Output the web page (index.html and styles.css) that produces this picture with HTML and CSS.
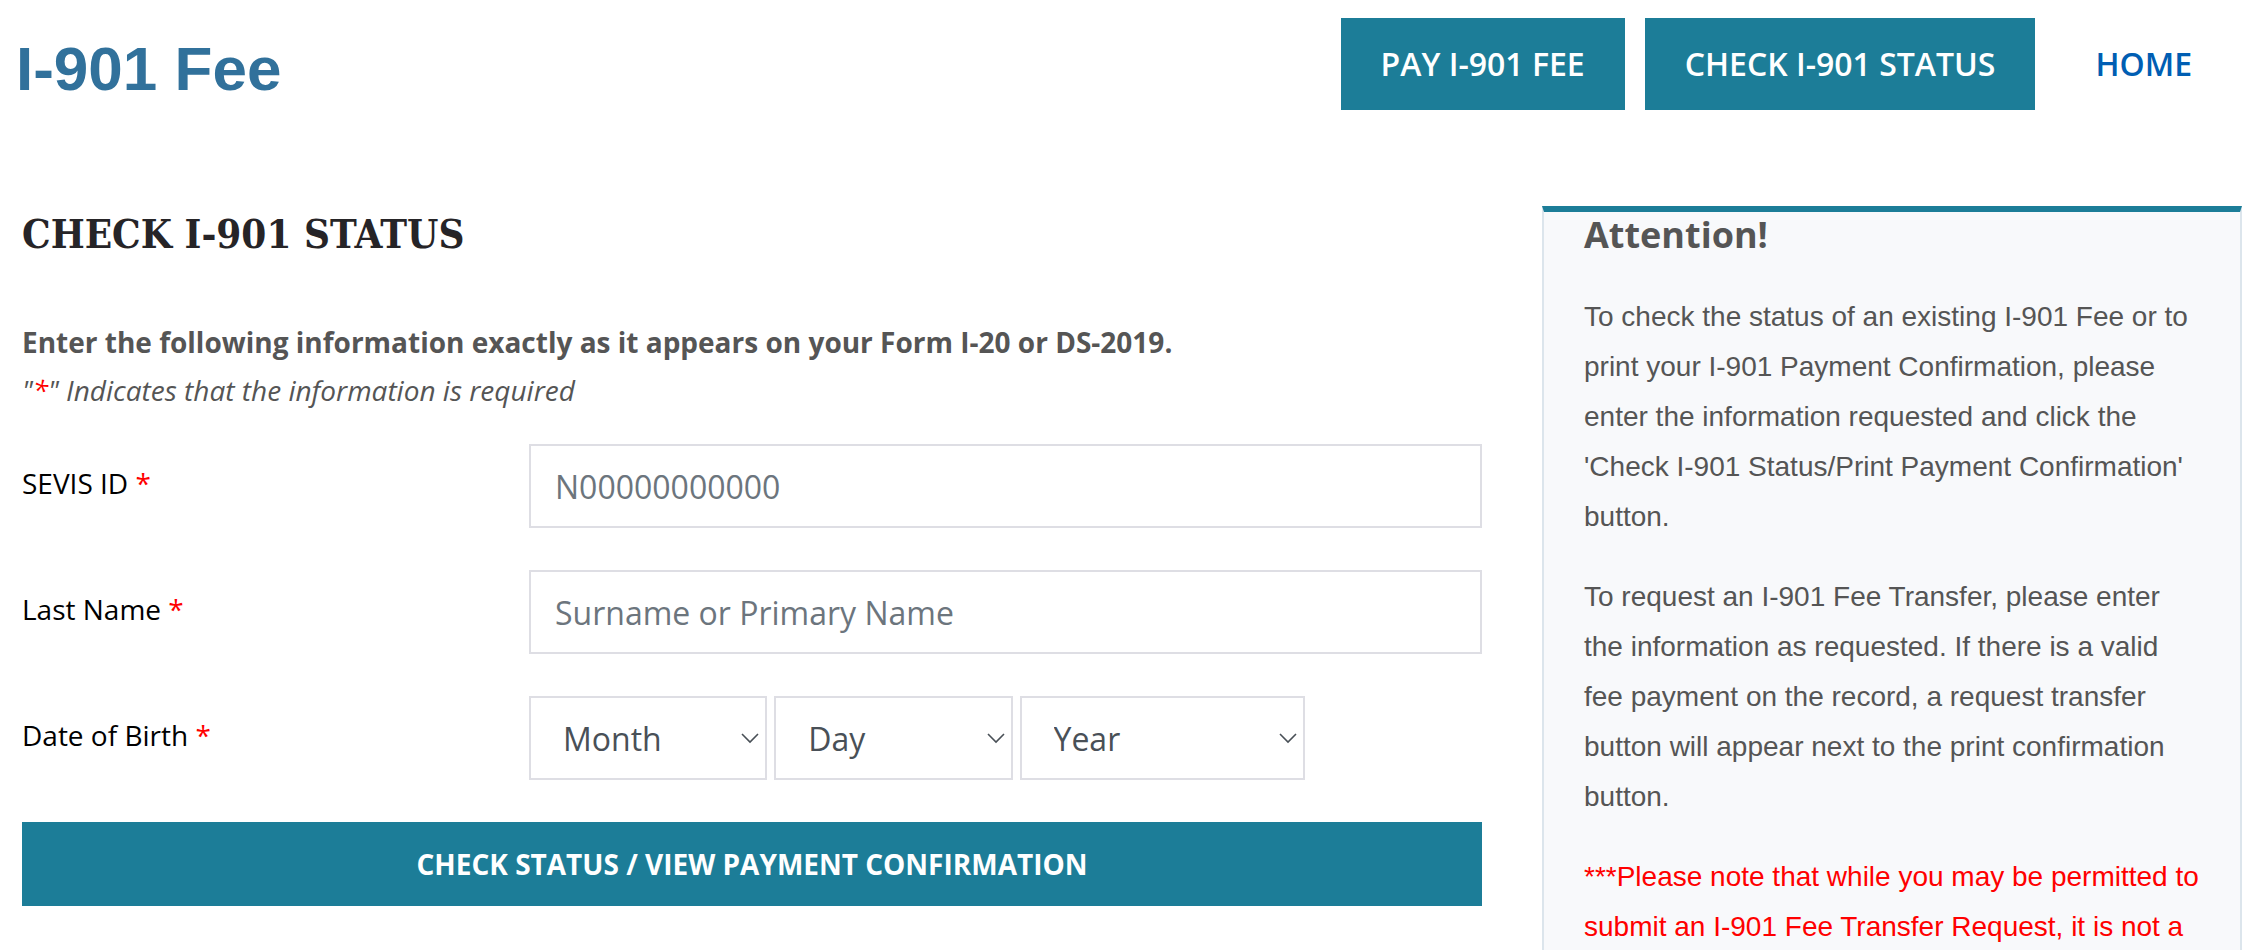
FILE: index.html
```
<!DOCTYPE html>
<html lang="en">
<head>
    <meta charset="UTF-8">
    <meta name="viewport" content="width=device-width, initial-scale=1.0">
    <title>Check I-901 Status</title>
    <link rel="stylesheet" href="styles.css">
</head>
<body>
    <header class="header">
        <a href="#" class="logo">I-901 Fee</a>
        <nav class="nav">
            <a href="#" class="nav-button">PAY I-901 FEE</a>
            <a href="#" class="nav-button">CHECK I-901 STATUS</a>
            <a href="#" class="nav-link">HOME</a>
        </nav>
    </header>
    <div class="content">
        <main>
            <h1>CHECK I-901 STATUS</h1>
            <p class="intro"><strong>Enter the following information exactly as it appears on your Form I-20 or DS-2019.</strong></p>
            <p class="intro"><em>"<span class="required">*</span>" Indicates that the information is required</em></p>
            <form class="status-form">
                <div class="row">
                    <label for="sevis-id">SEVIS ID <span class="required">*</span></label>
                    <input type="text" id="sevis-id" class="field" placeholder="N00000000000">
                </div>
                <div class="row">
                    <label for="last-name">Last Name <span class="required">*</span></label>
                    <input type="text" id="last-name" class="field" placeholder="Surname or Primary Name">
                </div>
                <div class="row">
                    <label for="month">Date of Birth <span class="required">*</span></label>
                    <div class="dates">
                        <div class="select">
                            <select id="month" class="field" aria-label="Month">
                                <option>Month</option>
                            </select>
                            <svg class="arrow" viewBox="0 0 18 11"><path d="M1 1l8 8 8-8"/></svg>
                        </div>
                        <div class="select">
                            <select id="day" class="field" aria-label="Day">
                                <option>Day</option>
                            </select>
                            <svg class="arrow" viewBox="0 0 18 11"><path d="M1 1l8 8 8-8"/></svg>
                        </div>
                        <div class="select select-year">
                            <select id="year" class="field" aria-label="Year">
                                <option>Year</option>
                            </select>
                            <svg class="arrow" viewBox="0 0 18 11"><path d="M1 1l8 8 8-8"/></svg>
                        </div>
                    </div>
                </div>
                <button type="submit" class="submit">CHECK STATUS / VIEW PAYMENT CONFIRMATION</button>
            </form>
        </main>
        <aside class="sidebar">
            <h2>Attention!</h2>
            <p>To check the status of an existing I-901 Fee or to print your I-901 Payment Confirmation, please enter the information requested and click the 'Check I-901 Status/Print Payment Confirmation' button.</p>
            <p>To request an I-901 Fee Transfer, please enter the information as requested. If there is a valid fee payment on the record, a request transfer button will appear next to the print confirmation button.</p>
            <p class="note">***Please note that while you may be permitted to submit an I-901 Fee Transfer Request, it is not a</p>
        </aside>
    </div>
</body>
</html>
```
FILE: styles.css
```
* {
    box-sizing: border-box;
}
body {
    margin: 0;
    background-color: white;
    color: #555;
    font-family: "Open Sans", sans-serif;
    font-size: 28px;
}
h1, h2, p {
    margin: 0;
}
.header {
    display: flex;
    justify-content: space-between;
    align-items: flex-start;
    padding: 18px 34px 0 16px;
}
.logo {
    color: #31719b;
    font-family: Arial, "Liberation Sans", sans-serif;
    font-size: 62px;
    font-weight: bold;
    line-height: 102px;
    text-decoration: none;
}
.nav {
    display: flex;
    gap: 20px;
}
.nav-button,
.nav-link {
    padding: 0 40px;
    font-size: 32px;
    font-weight: 600;
    line-height: 92px;
    text-decoration: none;
}
.nav-button {
    background-color: #1c7d98;
    color: white;
}
.nav-link {
    color: #005eb3;
}
.content {
    display: grid;
    grid-template-columns: 73fr 35fr;
    gap: 60px;
    padding: 86px 24px 0 22px;
}
h1 {
    margin-bottom: 56px;
    color: #262427;
    font-family: "Roboto Slab", "DejaVu Serif Condensed", "Liberation Serif", serif;
    font-size: 40px;
    font-weight: bold;
    line-height: 56px;
}
.intro {
    line-height: 48px;
}
.required {
    color: red;
}
.status-form {
    display: flex;
    flex-direction: column;
    gap: 42px;
    margin-top: 30px;
}
.row {
    display: grid;
    grid-template-columns: 507fr 953fr;
    align-items: center;
}
label {
    padding-bottom: 6px;
    color: black;
}
.field {
    width: 100%;
    height: 84px;
    padding: 0 24px;
    border: 2px solid #dedee4;
    border-radius: 0;
    background-color: white;
    color: #495057;
    font-family: inherit;
    font-size: 32px;
}
.field::placeholder {
    color: #6c757d;
    opacity: 1;
}
.dates {
    display: flex;
    gap: 7px;
}
.select {
    position: relative;
    width: 25%;
}
.select-year {
    width: 30%;
}
.select .field {
    appearance: none;
    padding: 0 32px;
}
.arrow {
    position: absolute;
    top: 37px;
    right: 8px;
    width: 18px;
    height: 11px;
    fill: none;
    stroke: #495057;
    stroke-width: 1.6;
    pointer-events: none;
}
.submit {
    height: 84px;
    border: none;
    background-color: #1c7d98;
    color: white;
    font-family: inherit;
    font-size: 28px;
    font-weight: bold;
}
.sidebar {
    padding: 0 40px;
    border: 2px solid #dce5ec;
    border-top: 6px solid #1c7d98;
    background-color: #f8f9fb;
    font-family: Arial, "Liberation Sans", sans-serif;
    line-height: 50px;
}
.sidebar h2 {
    margin-bottom: 34px;
    font-family: "Open Sans", sans-serif;
    font-size: 36px;
    line-height: 46px;
}
.sidebar p {
    margin-bottom: 30px;
}
.sidebar .note {
    margin-bottom: 0;
    color: red;
}
```
